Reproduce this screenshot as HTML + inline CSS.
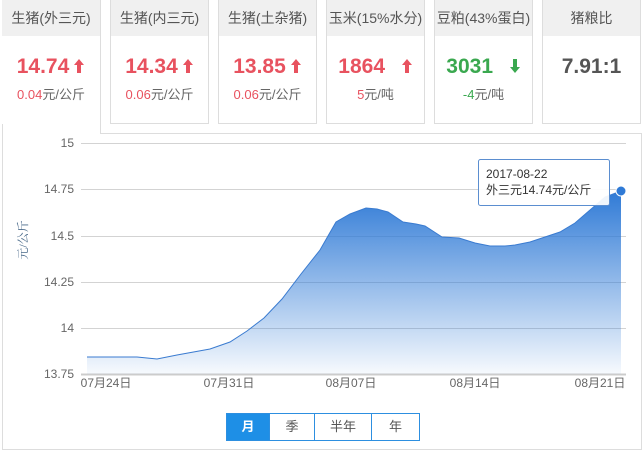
<!DOCTYPE html>
<html><head><meta charset="utf-8"><style>
*{margin:0;padding:0;box-sizing:border-box}
body{width:643px;height:452px;background:#fff;font-family:"Liberation Sans","Noto Sans CJK SC",sans-serif;position:relative;overflow:hidden}
.box{position:absolute;top:0;height:124px;border:1px solid #ddd;border-top:none;background:#fff;text-align:center}
.hd{height:36px;background:#f0f0f0;line-height:36px;font-size:14px;color:#555}
.v{font-size:21px;font-weight:bold;margin-top:18px;height:26px;line-height:26px}
.v svg{vertical-align:-1px;margin-left:4px}
.s{font-size:13px;color:#666;margin-top:4px}
.r{color:#e8525f}.g{color:#3aa84f}
.btn{position:absolute;top:413px;height:28px;line-height:26px;text-align:center;font-size:13px;border:1px solid #2d8fe0;color:#555;background:#fff}
</style></head><body>
<div style="position:absolute;left:2px;top:0;width:640px;height:450px;border:1px solid #ddd;border-top:none"></div>
<div style="position:absolute;left:100px;top:0;width:542px;height:134px;border-left:1px solid #ddd;border-bottom:1px solid #ddd;background:#fff"></div>
<div class="box" style="left:2px;width:98px;border:none"><div class="hd">生猪(外三元)</div><div class="v r">14.74<svg width="12" height="16" viewBox="0 0 12 16"><path d="M6,1 L11,7 L8,7 L8,15 L4,15 L4,7 L1,7 Z" fill="#e8525f"/></svg></div><div class="s"><span class="r">0.04</span>元/公斤</div></div>
<div class="box" style="left:110px;width:99px"><div class="hd">生猪(内三元)</div><div class="v r">14.34<svg width="12" height="16" viewBox="0 0 12 16"><path d="M6,1 L11,7 L8,7 L8,15 L4,15 L4,7 L1,7 Z" fill="#e8525f"/></svg></div><div class="s"><span class="r">0.06</span>元/公斤</div></div>
<div class="box" style="left:218px;width:99px"><div class="hd">生猪(土杂猪)</div><div class="v r">13.85<svg width="12" height="16" viewBox="0 0 12 16"><path d="M6,1 L11,7 L8,7 L8,15 L4,15 L4,7 L1,7 Z" fill="#e8525f"/></svg></div><div class="s"><span class="r">0.06</span>元/公斤</div></div>
<div class="box" style="left:326px;width:99px"><div class="hd">玉米(15%水分)</div><div class="v r">1864 &nbsp;<svg width="12" height="16" viewBox="0 0 12 16"><path d="M6,1 L11,7 L8,7 L8,15 L4,15 L4,7 L1,7 Z" fill="#e8525f"/></svg></div><div class="s"><span class="r">5</span>元/吨</div></div>
<div class="box" style="left:434px;width:99px"><div class="hd">豆粕(43%蛋白)</div><div class="v g">3031 &nbsp;<svg width="12" height="16" viewBox="0 0 12 16"><path d="M6,15 L11,9 L8,9 L8,1 L4,1 L4,9 L1,9 Z" fill="#3aa84f"/></svg></div><div class="s"><span class="g">-4</span>元/吨</div></div>
<div class="box" style="left:542px;width:99px"><div class="hd">猪粮比</div><div class="v" style="color:#555">7.91:1</div></div>

<svg width="643" height="452" style="position:absolute;left:0;top:0">
<defs><linearGradient id="gr" x1="0" y1="0" x2="0" y2="1">
<stop offset="0" stop-color="#2f7ad6"/><stop offset="1" stop-color="#2f7ad6" stop-opacity="0.04"/></linearGradient></defs>
<g stroke="#d3d3d3" stroke-width="1">
<line x1="81" y1="143.5" x2="626" y2="143.5"/><line x1="81" y1="189.5" x2="626" y2="189.5"/>
<line x1="81" y1="236.5" x2="626" y2="236.5"/><line x1="81" y1="282.5" x2="626" y2="282.5"/>
<line x1="81" y1="328.5" x2="626" y2="328.5"/></g>
<line x1="81" y1="374.5" x2="626" y2="374.5" stroke="#ccc" stroke-width="2"/>
<g font-size="12" fill="#666" text-anchor="end">
<text x="74" y="147">15</text><text x="74" y="193">14.75</text><text x="74" y="240">14.5</text>
<text x="74" y="286">14.25</text><text x="74" y="332">14</text><text x="74" y="378">13.75</text></g>
<text transform="translate(27,240) rotate(-90)" text-anchor="middle" font-size="12" fill="#4a6a8a" font-family="Liberation Serif,Noto Serif CJK SC,serif">元/公斤</text>
<path d="M87,357 L137,357 L157,359 L177,355 L210,349 L230,342 L247,331 L264,318 L282,299 L301,274 L320,250 L336,222 L350,214 L366,208 L377,209 L388,212 L403,222 L416,224 L425,226 L442,237 L459,238 L475,243 L490,246 L505,246 L515,245 L530,242 L548,236 L560,232 L575,223 L590,210 L605,197 L621,191 L621,374 L87,374 Z" fill="url(#gr)"/>
<path d="M87,357 L137,357 L157,359 L177,355 L210,349 L230,342 L247,331 L264,318 L282,299 L301,274 L320,250 L336,222 L350,214 L366,208 L377,209 L388,212 L403,222 L416,224 L425,226 L442,237 L459,238 L475,243 L490,246 L505,246 L515,245 L530,242 L548,236 L560,232 L575,223 L590,210 L605,197 L621,191" fill="none" stroke="#3a7bd0" stroke-width="1"/>
<circle cx="621" cy="191" r="5" fill="#2f7ad6" stroke="#fff" stroke-width="1"/>
<rect x="478.5" y="159.5" width="131" height="46" rx="2" fill="#fff" fill-opacity="0.92" stroke="#5b8ed0"/>
<text x="486" y="178" font-size="12" fill="#333">2017-08-22</text>
<text x="486" y="194" font-size="12" fill="#333">外三元14.74元/公斤</text>
<g font-size="12" fill="#666" text-anchor="middle">
<text x="106" y="387">07月24日</text><text x="229" y="387">07月31日</text><text x="351" y="387">08月07日</text>
<text x="475" y="387">08月14日</text><text x="600" y="387">08月21日</text></g>
</svg>
<div class="btn" style="left:226px;width:44px;background:#1e8fe6;color:#fff;font-weight:bold">月</div>
<div class="btn" style="left:269px;width:46px">季</div>
<div class="btn" style="left:314px;width:58px">半年</div>
<div class="btn" style="left:371px;width:49px">年</div>
</body></html>
